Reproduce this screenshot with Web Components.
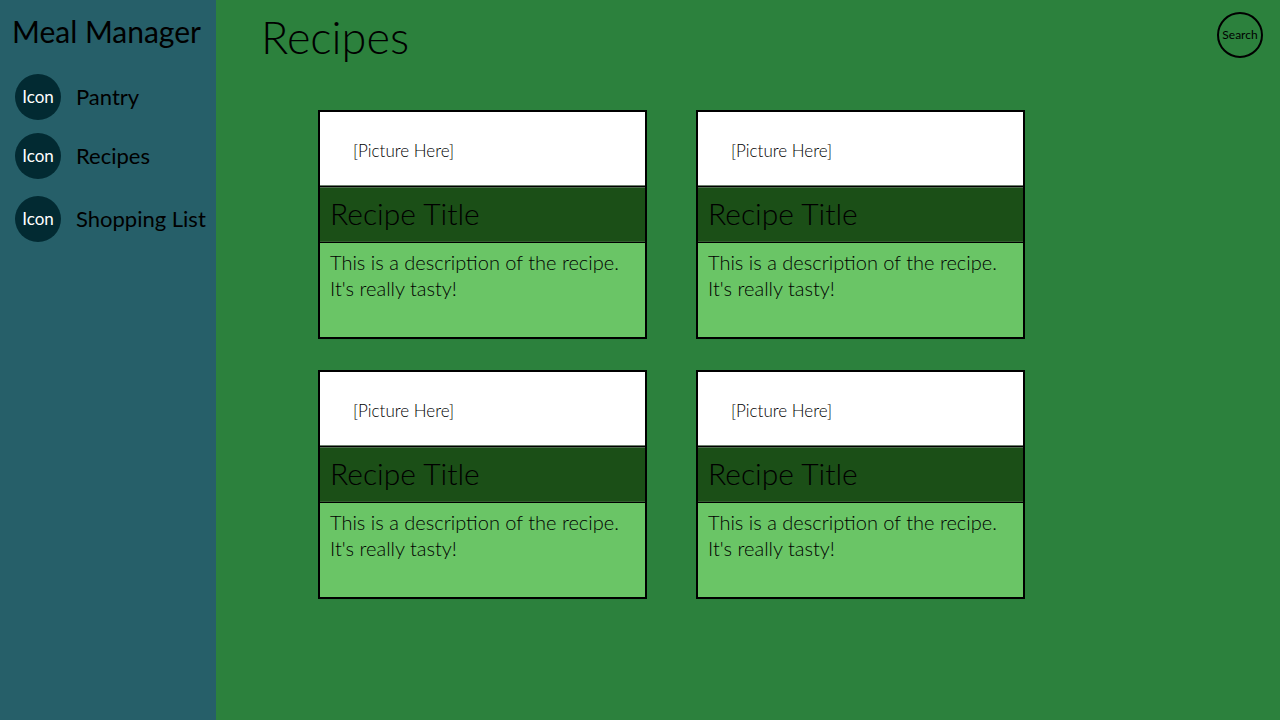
<!DOCTYPE html>
<html lang="en">
<head>
<meta charset="utf-8">
<meta name="viewport" content="width=device-width, initial-scale=1">
<title>Meal Manager</title>
<style>
  body { margin: 0; background: #2c813d; color: #000; font-family: Lato, "Open Sans", sans-serif; }
</style>
</head>
<body>
<meal-app>
  <side-bar slot="side" heading="Meal Manager">
    <nav-group>
      <nav-item href="#pantry">Pantry</nav-item>
      <nav-item href="#recipes">Recipes</nav-item>
    </nav-group>
    <nav-group>
      <nav-item href="#shopping">Shopping List</nav-item>
    </nav-group>
  </side-bar>
  <page-header>Recipes</page-header>
  <recipe-grid>
    <recipe-card><span slot="title">Recipe Title</span>This is a description of the recipe.<br>It's really tasty!</recipe-card>
    <recipe-card><span slot="title">Recipe Title</span>This is a description of the recipe.<br>It's really tasty!</recipe-card>
    <recipe-card><span slot="title">Recipe Title</span>This is a description of the recipe.<br>It's really tasty!</recipe-card>
    <recipe-card><span slot="title">Recipe Title</span>This is a description of the recipe.<br>It's really tasty!</recipe-card>
  </recipe-grid>
</meal-app>
<script>
  const define = (name, html, setup) => {
    const template = document.createElement('template');
    template.innerHTML = html;
    customElements.define(name, class extends HTMLElement {
      connectedCallback() {
        if (this.shadowRoot) return;
        this.attachShadow({ mode: 'open' }).append(template.content.cloneNode(true));
        if (setup) setup(this, this.shadowRoot);
      }
    });
  };

  define('meal-app', `
    <style>
      :host { display: grid; grid-template-columns: 216px minmax(0, 1fr); min-height: 100vh; }
    </style>
    <slot name="side"></slot>
    <main><slot></slot></main>`);

  define('side-bar', `
    <style>
      :host { display: block; box-sizing: border-box; padding: 12px 8px 12px 12px; background: #265f69; }
      h1 { margin: 0 0 24px; font-size: 30px; line-height: 38px; font-weight: 400; white-space: nowrap; }
      nav { display: flex; flex-direction: column; gap: 17px; padding-left: 3px; }
    </style>
    <h1></h1>
    <nav aria-label="Sections"><slot></slot></nav>`,
    (host, root) => { root.querySelector('h1').textContent = host.getAttribute('heading'); });

  define('nav-group', `
    <style>
      :host { display: flex; flex-direction: column; gap: 13px; }
    </style>
    <slot></slot>`);

  define('nav-item', `
    <style>
      :host { display: block; }
      a { display: flex; align-items: center; gap: 15px; color: inherit; text-decoration: none; font-size: 22px; line-height: 24px; white-space: nowrap; }
      .icon { display: grid; place-items: center; flex: none; width: 46px; height: 46px; border-radius: 50%; background: #022a32; color: #fff; font-size: 17px; }
    </style>
    <a><span class="icon">Icon</span><span><slot></slot></span></a>`,
    (host, root) => { root.querySelector('a').href = host.getAttribute('href'); });

  define('page-header', `
    <style>
      :host { display: flex; justify-content: space-between; align-items: flex-start; padding: 12px 17px 0 45px; }
      h2 { margin: 0; font-size: 45px; line-height: 50px; font-weight: 300; }
      button { box-sizing: border-box; width: 46px; height: 46px; padding: 0; border: 2px solid #000; border-radius: 50%; background: none; color: inherit; font: 400 12px/16px Lato, "Open Sans", sans-serif; cursor: pointer; }
    </style>
    <h2><slot></slot></h2>
    <button type="button">Search</button>`);

  define('recipe-grid', `
    <style>
      :host { display: grid; grid-template-columns: repeat(2, minmax(0, 329px)); gap: 31px 49px; padding: 48px 48px 48px 102px; }
    </style>
    <slot></slot>`);

  define('recipe-card', `
    <style>
      :host { display: block; border: 2px solid #000; background: #6ac566; font-weight: 300; }
      .picture { box-sizing: border-box; min-height: 74px; padding: 27px 33px 22px; border-bottom: 1px solid #6c7f6c; background: #fff; font-size: 17px; line-height: 24px; }
      h3 { margin: 0; padding: 6px 10px 8px; border: solid #000; border-width: 1px 0; background: #1b4f17; box-shadow: inset 0 1px #4e6b4c, inset 0 -1px #335f30; font-size: 30px; line-height: 41px; font-weight: 300; }
      p { box-sizing: border-box; min-height: 94px; margin: 0; padding: 6px 10px; font-size: 20px; line-height: 26px; }
    </style>
    <article>
      <div class="picture">[Picture Here]</div>
      <h3><slot name="title"></slot></h3>
      <p><slot></slot></p>
    </article>`);
</script>
</body>
</html>
